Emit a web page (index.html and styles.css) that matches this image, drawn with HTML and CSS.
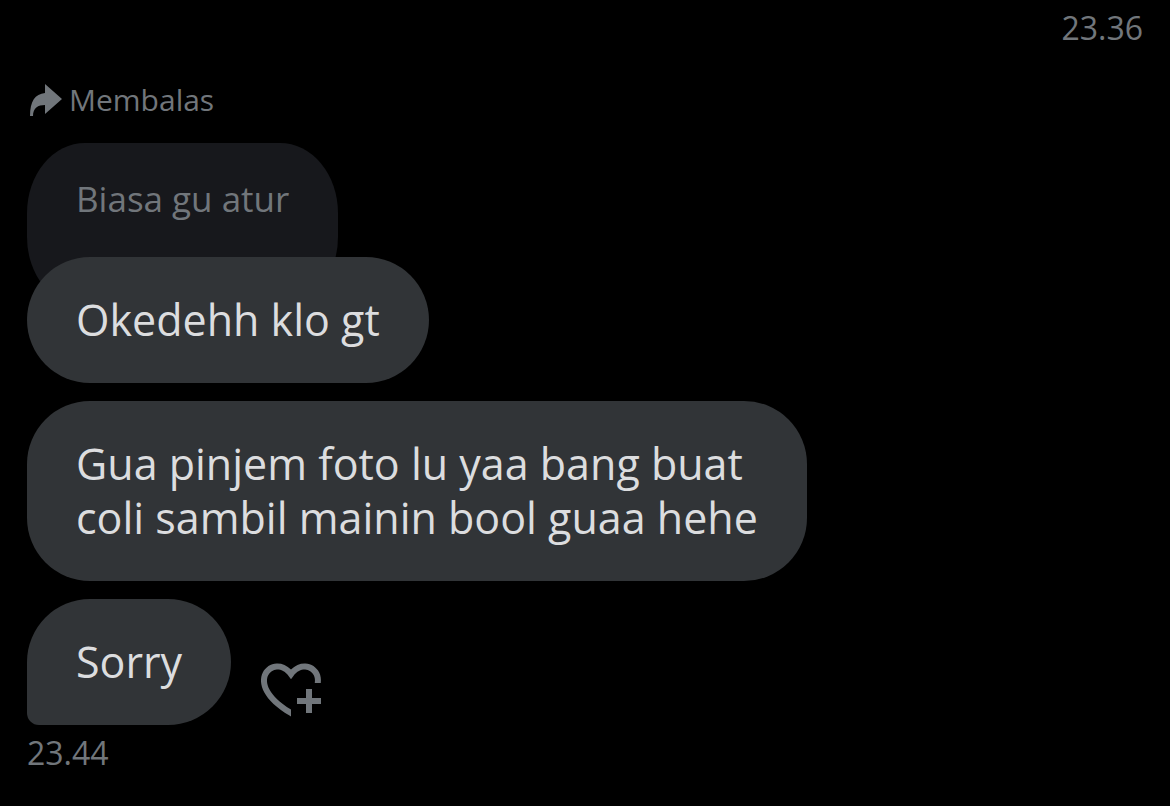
FILE: index.html
```html
<!DOCTYPE html>
<html lang="id">
<head>
  <meta charset="UTF-8">
  <title>Pesan</title>
  <meta name="viewport" content="width=device-width, initial-scale=1">
  <link rel="stylesheet" href="styles.css">
</head>
<body>

  <main class="chat">
    <time class="time time-sent">23.36</time>

    <div class="reply-label">
      <svg class="reply-icon" viewBox="0 0 32 32" aria-hidden="true">
        <path d="M15 0 L32 15 L15 30 V21 C8 21 3 24 3 32 H0 C0 17 5 10 15 9 Z"/>
      </svg>
      <span>Membalas</span>
    </div>

    <div class="quote">Biasa gu atur</div>
    <div class="bubble bubble-reply">Okedehh klo gt</div>
    <div class="bubble">Gua pinjem foto lu yaa bang buat<br>coli sambil mainin bool guaa hehe</div>

    <div class="row">
      <div class="bubble bubble-last">Sorry</div>
      <button class="react-btn" type="button" aria-label="Tambah reaksi">
        <svg viewBox="0 0 24 24" aria-hidden="true">
          <path d="M17 12v3h-2.998v2h3v3h2v-3h3v-2h-3.001v-3H17zm-5 6.839c-3.871-2.34-6.053-4.639-7.127-6.609-1.112-2.04-1.031-3.7-.479-4.82.561-1.13 1.667-1.84 2.91-1.91 1.222-.06 2.68.51 3.892 2.16l.806 1.09.805-1.09c1.211-1.65 2.668-2.22 3.89-2.16 1.242.07 2.347.78 2.908 1.91.334.677.49 1.554.321 2.59h2.011c.153-1.283-.039-2.469-.539-3.48-.887-1.79-2.647-2.91-4.601-3.01-1.65-.09-3.367.56-4.796 2.01-1.43-1.45-3.147-2.1-4.798-2.01-1.954.1-3.714 1.22-4.601 3.01-.896 1.81-.846 4.17.514 6.67 1.353 2.48 4.003 5.12 8.382 7.67l.502.299v-2.32z"/>
        </svg>
      </button>
    </div>

    <time class="time">23.44</time>
  </main>

</body>
</html>
```

FILE: styles.css
```css
* { box-sizing: border-box; }

body {
  font-family: "Open Sans", "Noto Sans", sans-serif;
  margin: 0;
  background-color: #000;
  color: #dcdddf;
}

.chat {
  display: flex;
  flex-direction: column;
  align-items: flex-start;
  padding: 8px 27px;
}

.time,
.reply-label {
  line-height: 40px;
  color: #71767b;
}

.time {
  font-size: 32px;
}

.time-sent {
  align-self: flex-end;
}

.time:last-child {
  margin-top: 8px;
}

.reply-label {
  display: flex;
  align-items: center;
  gap: 7px;
  margin-top: 32px;
  padding-left: 3px;
  font-size: 30px;
}

.reply-icon {
  width: 32px;
  height: 32px;
  fill: #71767b;
}

.quote {
  margin-top: 23px;
  padding: 32px 49px 84px;
  border-radius: 58px / 70px;
  background-color: #17181c;
  color: #71767b;
  font-size: 35px;
  line-height: 48px;
}

.bubble {
  margin-top: 18px;
  padding: 36px 49px;
  border-radius: 63px;
  background-color: #313437;
  font-size: 43px;
  line-height: 54px;
}

/* covers the lower part of the quoted message */
.bubble-reply {
  margin-top: -50px;
  z-index: 1;
}

.bubble-last {
  border-bottom-left-radius: 12px;
}

.row {
  display: flex;
  align-items: flex-end;
  gap: 24px;
}

.react-btn {
  width: 72px;
  height: 72px;
  padding: 0;
  border: none;
  background: transparent;
  cursor: pointer;
}

.react-btn svg {
  display: block;
  width: 100%;
  fill: #71767b;
}
```
